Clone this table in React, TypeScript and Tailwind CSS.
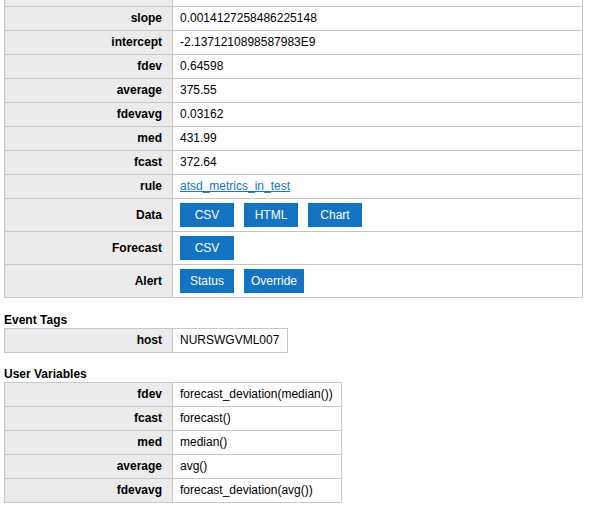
import React from 'react'

const BTN = 'inline-block min-w-[54px] h-6 px-[7px] mr-[10px] bg-[#1473c3] text-white text-[12px] leading-6 text-center'

const rows: [string, React.ReactNode][] = [
  ['', ''],
  ['slope', '0.0014127258486225148'],
  ['intercept', '-2.1371210898587983E9'],
  ['fdev', '0.64598'],
  ['average', '375.55'],
  ['fdevavg', '0.03162'],
  ['med', '431.99'],
  ['fcast', '372.64'],
  ['rule', <a className="text-[#1a73c4] underline">atsd_metrics_in_test</a>],
]

const btnRows: [string, string[]][] = [
  ['Data', ['CSV', 'HTML', 'Chart']],
  ['Forecast', ['CSV']],
  ['Alert', ['Status', 'Override']],
]

const tags: [string, string][] = [['host', 'NURSWGVML007']]

const vars: [string, string][] = [
  ['fdev', 'forecast_deviation(median())'],
  ['fcast', 'forecast()'],
  ['med', 'median()'],
  ['average', 'avg()'],
  ['fdevavg', 'forecast_deviation(avg())'],
]

const TH = 'w-[168px] h-6 border border-[#c8c8c8] bg-[#ebebeb] text-right font-bold pl-2 pr-[10px] py-1 leading-[15px] whitespace-nowrap'
const TD = 'border border-[#c8c8c8] bg-white text-left pl-[7px] pr-2 py-1 leading-[15px] whitespace-nowrap'

function KV({ items }: { items: [string, string][] }) {
  return (
    <table className="border-collapse ml-1">
      <tbody>
        {items.map(([k, v]) => (
          <tr key={k}>
            <td className={TH}>{k}</td>
            <td className={TD}>{v}</td>
          </tr>
        ))}
      </tbody>
    </table>
  )
}

export default function App() {
  return (
    <div className="w-[589px] h-[506px] overflow-hidden bg-white text-[12px] text-black" style={{ fontFamily: '"Liberation Sans", Arial, sans-serif' }}>
      <table className="border-collapse ml-1 mt-[-18px] w-[579px]">
        <tbody>
          {rows.map(([k, v], i) => (
            <tr key={i}>
              <td className={TH}>{k}</td>
              <td className={TD}>{v}</td>
            </tr>
          ))}
          {btnRows.map(([k, btns]) => (
            <tr key={k}>
              <td className={TH}>{k}</td>
              <td className="border border-[#c8c8c8] bg-white pl-[7px] py-1">
                <div className="flex">
                  {btns.map(b => (
                    <span key={b} className={BTN}>{b}</span>
                  ))}
                </div>
              </td>
            </tr>
          ))}
        </tbody>
      </table>

      <h3 className="ml-1 mt-[15px] font-bold leading-[15px]">Event Tags</h3>
      <KV items={tags} />

      <h3 className="ml-1 mt-[14px] font-bold leading-[15px]">User Variables</h3>
      <KV items={vars} />
    </div>
  )
}
